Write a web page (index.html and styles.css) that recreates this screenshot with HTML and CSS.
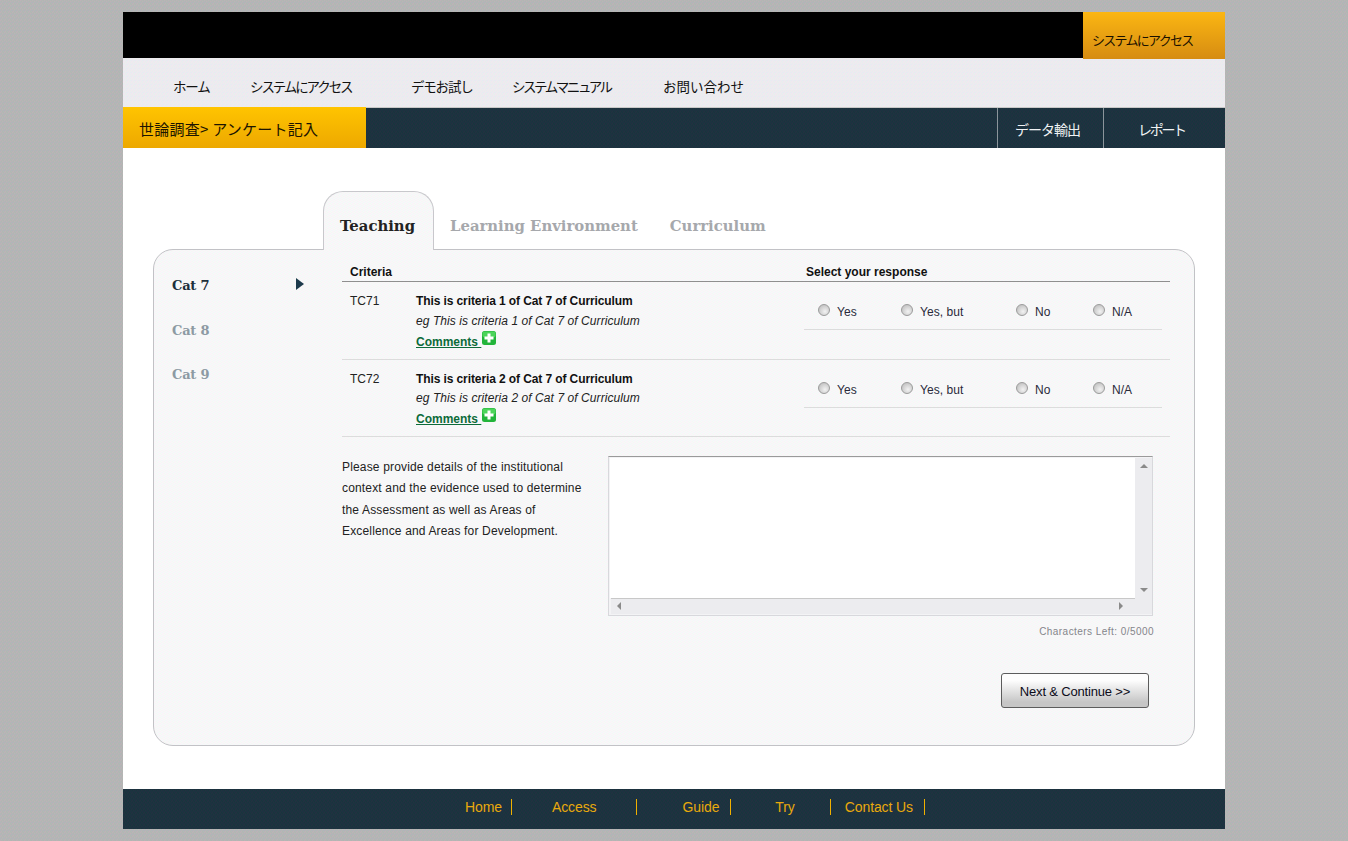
FILE: index.html
```html
<!DOCTYPE html>
<html lang="ja">
<head>
<meta charset="utf-8">
<title>アンケート記入</title>
<link rel="stylesheet" href="styles.css">
</head>
<body>
<div class="page">
  <header class="topbar">
    <a class="access-btn">システムにアクセス</a>
  </header>
  <nav class="nav">
    <a class="nav-item nav-home nav-mid">ホーム</a>
    <a class="nav-item nav-access nav-tight">システムにアクセス</a>
    <a class="nav-item nav-demo nav-mid">デモお試し</a>
    <a class="nav-item nav-manual nav-tighter">システムマニュアル</a>
    <a class="nav-item">お問い合わせ</a>
  </nav>
  <div class="subbar">
    <div class="crumb">世論調査&gt; アンケート記入</div>
    <div class="subactions">
      <a class="subaction sub-export">データ輸出</a>
      <a class="subaction sub-report">レポート</a>
    </div>
  </div>
  <main class="main">
    <div class="tabs">
      <a class="tab tab-active">Teaching</a>
      <a class="tab">Learning Environment</a>
      <a class="tab">Curriculum</a>
    </div>
    <section class="panel">
      <aside class="side">
        <a class="cat cat-active">Cat 7
          <svg class="cat-arrow" width="8" height="12" viewBox="0 0 8 12"><path d="M0 0L8 6L0 12Z" fill="#1d3a4c"/></svg>
        </a>
        <a class="cat">Cat 8</a>
        <a class="cat">Cat 9</a>
      </aside>
      <div class="content">
        <div class="head">
          <div class="head-crit">Criteria</div>
          <div>Select your response</div>
        </div>

        <div class="row">
          <div class="code">TC71</div>
          <div class="crit">
            <div class="line title">This is criteria 1 of Cat 7 of Curriculum</div>
            <div class="line eg">eg This is criteria 1 of Cat 7 of Curriculum</div>
            <div class="line more"><a class="comments">Comments </a><svg class="plus" width="14" height="14" viewBox="0 0 14 14"><rect x="0" y="0" width="14" height="14" rx="2.5" fill="#22b43a"/><rect x="0.5" y="0.5" width="13" height="6" rx="2" fill="#4cd45a"/><path d="M5.5 2.5h3v3h3v3h-3v3h-3v-3h-3v-3h3z" fill="#fff"/></svg></div>
          </div>
          <div class="resp">
            <label class="opt opt-yes"><input class="radio" type="radio" name="r1">Yes</label>
            <label class="opt opt-but"><input class="radio" type="radio" name="r1">Yes, but</label>
            <label class="opt opt-no"><input class="radio" type="radio" name="r1">No</label>
            <label class="opt"><input class="radio" type="radio" name="r1">N/A</label>
          </div>
        </div>

        <div class="row row-second">
          <div class="code">TC72</div>
          <div class="crit">
            <div class="line title">This is criteria 2 of Cat 7 of Curriculum</div>
            <div class="line eg">eg This is criteria 2 of Cat 7 of Curriculum</div>
            <div class="line more"><a class="comments">Comments </a><svg class="plus" width="14" height="14" viewBox="0 0 14 14"><rect x="0" y="0" width="14" height="14" rx="2.5" fill="#22b43a"/><rect x="0.5" y="0.5" width="13" height="6" rx="2" fill="#4cd45a"/><path d="M5.5 2.5h3v3h3v3h-3v3h-3v-3h-3v-3h3z" fill="#fff"/></svg></div>
          </div>
          <div class="resp">
            <label class="opt opt-yes"><input class="radio" type="radio" name="r2">Yes</label>
            <label class="opt opt-but"><input class="radio" type="radio" name="r2">Yes, but</label>
            <label class="opt opt-no"><input class="radio" type="radio" name="r2">No</label>
            <label class="opt"><input class="radio" type="radio" name="r2">N/A</label>
          </div>
        </div>

        <div class="details">
          <p class="prompt">Please provide details of the institutional context and the evidence used to determine the Assessment as well as Areas of Excellence and Areas for Development.</p>
          <div class="editor">
            <div class="box">
              <textarea class="area" aria-label="details"></textarea>
              <div class="vbar"><i class="tri tri-up"></i><i class="tri tri-down"></i></div>
              <div class="hbar"><i class="tri tri-left"></i><i class="tri tri-right"></i></div>
              <div class="corner"></div>
            </div>
            <div class="chars">Characters Left: 0/5000</div>
          </div>
        </div>
        <div class="actions"><button class="next" type="button">Next &amp; Continue &gt;&gt;</button></div>
      </div>
    </section>
  </main>
  <footer class="footer">
    <a class="flink f-home">Home</a>
    <a class="flink f-access">Access</a>
    <a class="flink f-guide">Guide</a>
    <a class="flink f-try">Try</a>
    <a class="flink f-contact">Contact Us</a>
  </footer>
</div>
</body>
</html>
```
FILE: styles.css
```css
* { box-sizing: border-box; }
html, body { margin: 0; padding: 0; }
body {
  padding-top: 12px;
  font-family: "Liberation Sans", Arial, "Noto Sans CJK JP", sans-serif;
  font-size: 12px;
  color: #222;
  background: #b5b5b4 url("data:image/svg+xml,%3Csvg xmlns='http://www.w3.org/2000/svg' width='4' height='4' shape-rendering='crispEdges'%3E%3Cpath fill='%23bdb1b8' d='M0 0h1v1H0zM2 1h1v1H2zM1 3h1v1H1z'/%3E%3Cpath fill='%23adb9b2' d='M1 1h1v1H1zM3 0h1v1H3zM2 3h1v1H2z'/%3E%3Cpath fill='%23b0b4ba' d='M3 2h1v1H3zM0 2h1v1H0z'/%3E%3C/svg%3E");
}
.page { width: 1102px; height: 817px; margin: 0 auto; background: #fff; }

.topbar { height: 46px; background: #000; display: flex; justify-content: flex-end; }
.access-btn {
  width: 142px; height: 47px; padding: 19px 0 0 9px;
  font-family: "Noto Sans CJK JP", sans-serif; font-size: 13px; line-height: 18px; letter-spacing: -1.7px;
  color: #1a1000;
  background: linear-gradient(#fbb612, #d68c12);
  position: relative; z-index: 1;
}

.nav {
  height: 49px; padding: 18px 0 0 50px; display: flex;
  font-family: "Noto Sans CJK JP", sans-serif; font-size: 13.5px; line-height: 20px;
  color: #111;
  background: #ecebef url("data:image/svg+xml,%3Csvg xmlns='http://www.w3.org/2000/svg' width='4' height='4' shape-rendering='crispEdges'%3E%3Cpath fill='%23f3e6f0' d='M0 0h1v1H0zM2 1h1v1H2zM1 3h1v1H1z'/%3E%3Cpath fill='%23e6f0ec' d='M1 1h1v1H1zM3 0h1v1H3zM2 3h1v1H2z'/%3E%3Cpath fill='%23e8eaf2' d='M3 2h1v1H3zM0 2h1v1H0z'/%3E%3C/svg%3E");
}
.nav-home { width: 77px; }
.nav-access { width: 161px; }
.nav-demo { width: 101px; }
.nav-manual { width: 151px; }
.nav-tight { letter-spacing: -2.1px; }
.nav-tighter { letter-spacing: -2.45px; }
.nav-mid { letter-spacing: -1.2px; }

.subbar {
  height: 41px; display: flex; justify-content: space-between;
  font-family: "Noto Sans CJK JP", sans-serif;
  background: #1d3240 url("data:image/svg+xml,%3Csvg xmlns='http://www.w3.org/2000/svg' width='4' height='4' shape-rendering='crispEdges'%3E%3Cpath fill='%23243040' d='M0 0h1v1H0zM2 1h1v1H2zM1 3h1v1H1z'/%3E%3Cpath fill='%2316363c' d='M1 1h1v1H1zM3 0h1v1H3zM2 3h1v1H2z'/%3E%3C/svg%3E");
  border-top: 1px solid #c8c8c8;
}
.crumb {
  width: 243px; padding: 11px 0 0 16px; margin-top: -1px;
  font-size: 15px; line-height: 22px; letter-spacing: 0.25px; color: #1c1400; white-space: nowrap;
  background: linear-gradient(#ffc400, #eda800);
}
.subactions { display: flex; height: 40px; }
.subaction { padding-top: 11px; font-size: 14px; line-height: 20px; color: #f0f2f4; border-left: 1px solid #8b949b; }
.sub-export { width: 106px; padding-left: 17px; letter-spacing: -1px; }
.sub-report { width: 122px; padding-left: 34px; letter-spacing: -2.3px; }

.main { height: 641px; padding: 43px 30px 0; }
.tabs { height: 58px; margin-left: 170px; display: flex; align-items: flex-start; }
.tab {
  height: 58px; padding: 25px 16px 0;
  font-family: "DejaVu Serif", Georgia, serif; font-weight: bold; font-size: 14.85px; line-height: 21px;
  color: #a6a8ac; white-space: nowrap;
}
.tab-active {
  width: 111px; height: 59px; padding-top: 24px; color: #222;
  border: 1px solid #c8c8cc; border-bottom: 0; border-radius: 20px 20px 0 0;
  background: #f8f8f8 url("data:image/svg+xml,%3Csvg xmlns='http://www.w3.org/2000/svg' width='4' height='4' shape-rendering='crispEdges'%3E%3Cpath fill='%23fbf2f9' d='M0 0h1v1H0zM2 1h1v1H2zM1 3h1v1H1z'/%3E%3Cpath fill='%23f2faf5' d='M1 1h1v1H1zM3 0h1v1H3zM2 3h1v1H2z'/%3E%3Cpath fill='%23f4f7fa' d='M3 2h1v1H3zM0 2h1v1H0z'/%3E%3C/svg%3E");
  position: relative; z-index: 1;
}
.panel {
  width: 1042px; height: 497px; display: flex;
  border: 1px solid #c2c2c6; border-radius: 20px;
  background: #f8f8f8 url("data:image/svg+xml,%3Csvg xmlns='http://www.w3.org/2000/svg' width='4' height='4' shape-rendering='crispEdges'%3E%3Cpath fill='%23fbf2f9' d='M0 0h1v1H0zM2 1h1v1H2zM1 3h1v1H1z'/%3E%3Cpath fill='%23f2faf5' d='M1 1h1v1H1zM3 0h1v1H3zM2 3h1v1H2z'/%3E%3Cpath fill='%23f4f7fa' d='M3 2h1v1H3zM0 2h1v1H0z'/%3E%3C/svg%3E");
}

.side { width: 188px; padding: 26px 0 0 18px; }
.cat {
  display: flex; justify-content: space-between; align-items: center;
  width: 132px; height: 20px; margin-bottom: 24.5px;
  font-family: "DejaVu Serif", Georgia, serif; font-weight: bold; font-size: 13px; line-height: 20px; letter-spacing: -0.2px;
  color: #8d9aa3;
}
.cat-active { color: #1d2f3b; }
.cat-arrow { margin-top: -5px; }

.content { width: 828px; }
.head {
  height: 32px; padding-top: 15px; display: flex;
  font-weight: bold; line-height: 14px; color: #111;
  border-bottom: 1px solid #8f8f8f;
}
.head-crit { width: 464px; padding-left: 8px; }

.row { display: grid; grid-template-columns: 74px 388px 358px; height: 78px; border-bottom: 1px solid #dcdcdc; }
.row-second { height: 77px; }
.code { padding: 9px 0 0 8px; line-height: 21px; color: #222; }
.crit { padding-top: 9px; }
.line { height: 21px; line-height: 21px; white-space: nowrap; }
.title { font-weight: bold; color: #111; letter-spacing: -0.1px; }
.eg { margin-top: -1px; font-style: italic; color: #222; letter-spacing: 0.07px; }
.more { margin-top: -1px; }
.row-second .eg { margin-top: -2px; }
.comments { font-weight: bold; color: #0c6b3a; text-decoration: underline; }
.plus { vertical-align: 1px; margin-left: 1px; }

.resp {
  height: 48px; padding: 22px 0 0 14px; display: flex; align-items: flex-start;
  border-bottom: 1px solid #dcdcdc;
}
.opt { display: flex; flex: none; align-items: center; width: 77px; height: 16px; line-height: 16px; color: #2a2a3a; white-space: nowrap; letter-spacing: 0.05px; }
.opt-yes { width: 83px; }
.opt-but { width: 115px; }
.radio {
  appearance: none; -webkit-appearance: none;
  width: 12px; height: 12px; margin: -4px 7px 0 0; flex: none;
  border: 1px solid #9b9b9b; border-radius: 50%;
  background: radial-gradient(circle at 60% 65%, #f2f2f2, #c8c8c8 70%);
}

.details { display: flex; padding-top: 20px; }
.prompt { width: 266px; height: 100px; margin: 0; padding-right: 20px; line-height: 21.33px; letter-spacing: 0.16px; color: #222; }
.editor { width: 546px; margin-top: -1px; }
.box {
  display: grid; grid-template-columns: 525px 17px; grid-template-rows: 140px 16px;
  height: 160px; width: 545px; padding: 1px;
  border: 1px solid #d8d8dc; border-top-color: #9a9a9a;
  background: #f3f3f5;
}
.area { display: block; width: 100%; height: 100%; border: 0; padding: 0; margin: 0; resize: none; outline: 0; background: #fff; }
.vbar, .hbar, .corner { position: relative; background: #ececef; }
.hbar { border-top: 1px solid #c8c8c8; margin-left: 1px; }
.tri { position: absolute; width: 0; height: 0; border-style: solid; border-color: transparent; }
.tri-up { top: 6px; left: 5px; border-width: 0 4px 4px; border-bottom-color: #8a8a8a; }
.tri-down { bottom: 6px; left: 5px; border-width: 4px 4px 0; border-top-color: #8a8a8a; }
.tri-left { top: 3px; left: 6px; border-width: 4px 4px 4px 0; border-right-color: #8a8a8a; }
.tri-right { top: 3px; right: 12px; border-width: 4px 0 4px 4px; border-left-color: #8a8a8a; }
.chars { margin-top: 10px; font-size: 10px; line-height: 12px; letter-spacing: 0.45px; color: #85858a; text-align: right; }

.actions { display: flex; justify-content: flex-end; padding: 35px 21px 0 0; }
.next {
  width: 148px; height: 35px; padding: 1px 0 0;
  font-family: "Liberation Sans", Arial, sans-serif; font-size: 13px; letter-spacing: -0.17px; color: #0c0c1a;
  border: 1px solid #5c5c5c; border-radius: 3px;
  background: linear-gradient(#fdfdfd 20%, #c6c6c6 85%);
}

.footer {
  height: 40px; padding: 10px 0 0 342px; display: flex; align-items: flex-start;
  background: #1d3240 url("data:image/svg+xml,%3Csvg xmlns='http://www.w3.org/2000/svg' width='4' height='4' shape-rendering='crispEdges'%3E%3Cpath fill='%23243040' d='M0 0h1v1H0zM2 1h1v1H2zM1 3h1v1H1z'/%3E%3Cpath fill='%2316363c' d='M1 1h1v1H1zM3 0h1v1H3zM2 3h1v1H2z'/%3E%3C/svg%3E");
}
.flink {
  display: block; height: 16px; font-size: 14px; line-height: 16px; letter-spacing: -0.1px;
  color: #e9a90c; border-right: 1px solid #f0b000; white-space: nowrap;
}
.f-home { padding-right: 9px; }
.f-access { padding: 0 40px 0 40px; }
.f-guide { padding: 0 11px 0 45px; }
.f-try { padding: 0 35px 0 44px; }
.f-contact { padding: 0 11px 0 14px; }
```
